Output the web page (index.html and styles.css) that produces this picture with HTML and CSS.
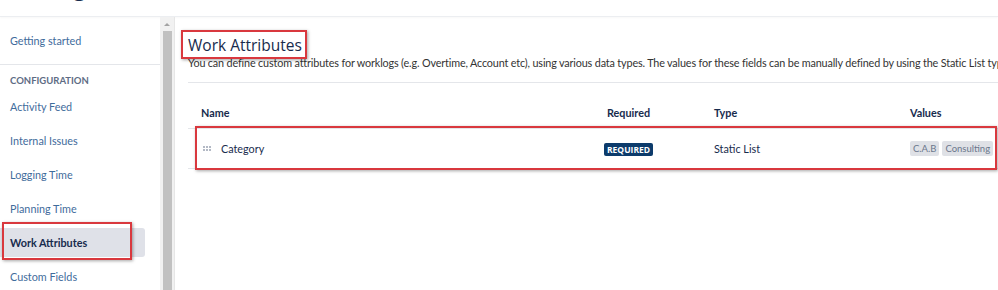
FILE: index.html
```html
<!DOCTYPE html>
<html>
<head>
    <title>Work Attributes</title>
    <link rel="stylesheet" href="styles.css">
</head>
<body>
    <div class="top-header">
        <h1 class="app-title">Configuration</h1>
    </div>

    <div class="layout">
        <nav class="sidebar">
            <div class="nav-top">
                <a href="#" class="nav-link">Getting started</a>
            </div>
            <div class="nav-section">Configuration</div>
            <a href="#" class="nav-item">Activity Feed</a>
            <a href="#" class="nav-item">Internal Issues</a>
            <a href="#" class="nav-item">Logging Time</a>
            <a href="#" class="nav-item">Planning Time</a>
            <a href="#" class="nav-item active">Work Attributes<span class="annot annot-nav"></span></a>
            <a href="#" class="nav-item">Custom Fields</a>
        </nav>

        <div class="scrollbar">
            <div class="scroll-arrow"></div>
            <div class="scroll-thumb"></div>
        </div>

        <main class="content">
            <h2 class="page-title">Work Attributes<span class="annot annot-title"></span></h2>
            <p class="page-desc">You can define custom attributes for worklogs (e.g. Overtime, Account etc), using various data types. The values for these fields can be manually defined by using the Static List type.</p>

            <div class="attr-table">
                <div class="attr-row attr-head">
                    <div class="col-name">Name</div>
                    <div class="col-req">Required</div>
                    <div class="col-type">Type</div>
                    <div class="col-values">Values</div>
                </div>
                <div class="attr-row attr-item">
                    <div class="col-name">
                        <svg class="drag" width="8" height="5" viewBox="0 0 8 5">
                            <circle cx="1" cy="1" r="0.75" />
                            <circle cx="4" cy="1" r="0.75" />
                            <circle cx="7" cy="1" r="0.75" />
                            <circle cx="1" cy="4" r="0.75" />
                            <circle cx="4" cy="4" r="0.75" />
                            <circle cx="7" cy="4" r="0.75" />
                        </svg>
                        <span>Category</span>
                    </div>
                    <div class="col-req"><span class="badge">REQUIRED</span></div>
                    <div class="col-type">Static List</div>
                    <div class="col-values">
                        <span class="tag">C.A.B</span>
                        <span class="tag">Consulting</span>
                    </div>
                    <span class="annot annot-row"></span>
                </div>
            </div>
        </main>
    </div>
</body>
</html>
```

FILE: styles.css
```css
html, body {
    margin: 0;
    padding: 0;
    overflow: hidden;
}
body {
    font-family: Lato, "Open Sans", sans-serif;
    font-size: 10.8px;
    color: #333;
    background: white;
    width: 998px;
    height: 290px;
}
.top-header {
    height: 16px;
    overflow: hidden;
    border-bottom: 1px solid #eceef1;
    box-shadow: 0 1px 2px rgba(0,0,0,0.03);
}
.app-title {
    margin: -27px 0 0 20px;
    font-family: "Open Sans", sans-serif;
    font-size: 22px;
    font-weight: 400;
    line-height: 28px;
    color: #172b4d;
}
.layout {
    display: flex;
    height: 273px;
    overflow: hidden;
}
.sidebar {
    width: 160px;
    flex-shrink: 0;
    display: flex;
    flex-direction: column;
}
.nav-top {
    flex-shrink: 0;
    height: 48px;
    border-bottom: 1px solid #e4e6ea;
    display: flex;
    align-items: center;
    padding: 0 0 0 10px;
    box-sizing: border-box;
}
.nav-link, .nav-item {
    color: #3f6c9c;
    text-decoration: none;
}
.nav-section {
    flex-shrink: 0;
    padding: 9px 0 0 10px;
    line-height: 14px;
    font-size: 9.5px;
    font-weight: 700;
    color: #5e6c84;
    text-transform: uppercase;
    margin-bottom: 4px;
}
.nav-item {
    position: relative;
    display: flex;
    align-items: center;
    height: 29px;
    margin-bottom: 5px;
    padding-left: 10px;
    width: 145px;
    box-sizing: border-box;
    border-radius: 0 3px 3px 0;
    flex-shrink: 0;
}
.nav-item.active {
    background: #dfe1e8;
    color: #172b4d;
    font-weight: 700;
}
.scrollbar {
    width: 14px;
    flex-shrink: 0;
    background: #f1f1f1;
    border-right: 1px solid #e6e6e6;
    display: flex;
    flex-direction: column;
    align-items: center;
}
.scroll-arrow {
    margin-top: 6px;
    width: 0;
    height: 0;
    border-left: 3px solid transparent;
    border-right: 3px solid transparent;
    border-bottom: 3px solid #a3a3a3;
}
.scroll-thumb {
    margin-top: 5px;
    width: 9px;
    flex: 1;
    background: #c1c1c1;
}
.content {
    flex: 1;
    padding: 18px 0 0 13px;
    min-width: 0;
}
.page-title {
    position: relative;
    display: inline-block;
    margin: 0;
    font-family: "Open Sans", sans-serif;
    font-size: 15.5px;
    line-height: 20px;
    font-weight: 400;
    color: #172b4d;
}
.page-desc {
    margin: 0;
    line-height: 15px;
    white-space: nowrap;
    letter-spacing: -0.15px;
    color: #333;
    padding-bottom: 12px;
    border-bottom: 1px solid #e4e6ea;
}
.attr-table {
    margin-top: 13px;
}
.attr-row {
    position: relative;
    display: grid;
    grid-template-columns: 406px 107px 196px 1fr;
    align-items: center;
    padding-left: 13px;
    border-bottom: 1px solid #e4e6ea;
}
.attr-head {
    height: 32px;
    font-weight: 700;
    color: #172b4d;
}
.attr-item {
    height: 39px;
    color: #172b4d;
}
.attr-item .col-name {
    display: flex;
    align-items: center;
    gap: 10px;
    padding-left: 2px;
}
.drag {
    fill: #42526e;
}
.badge {
    display: inline-block;
    margin-left: -3px;
    background: #0c3b6b;
    color: white;
    font-family: "Open Sans", sans-serif;
    font-size: 8.5px;
    font-weight: 700;
    padding: 1px 3px;
    border-radius: 2px;
    line-height: 11px;
}
.col-values {
    display: flex;
    gap: 3px;
}
.tag {
    background: #dfe1e6;
    color: #6b778c;
    font-size: 9.5px;
    line-height: 15px;
    padding: 0 3px;
    border-radius: 2px;
}
.annot {
    position: absolute;
    border: 2px solid #d9383e;
    box-shadow: 1px 1px 3px rgba(0,0,0,0.35);
    pointer-events: none;
}
.annot-nav {
    left: 2px;
    top: -6px;
    width: 126px;
    height: 34px;
}
.annot-title {
    left: -7px;
    top: -5px;
    width: 122px;
    height: 25px;
}
.annot-row {
    left: 7px;
    top: -3px;
    width: 798px;
    height: 40px;
}
```
